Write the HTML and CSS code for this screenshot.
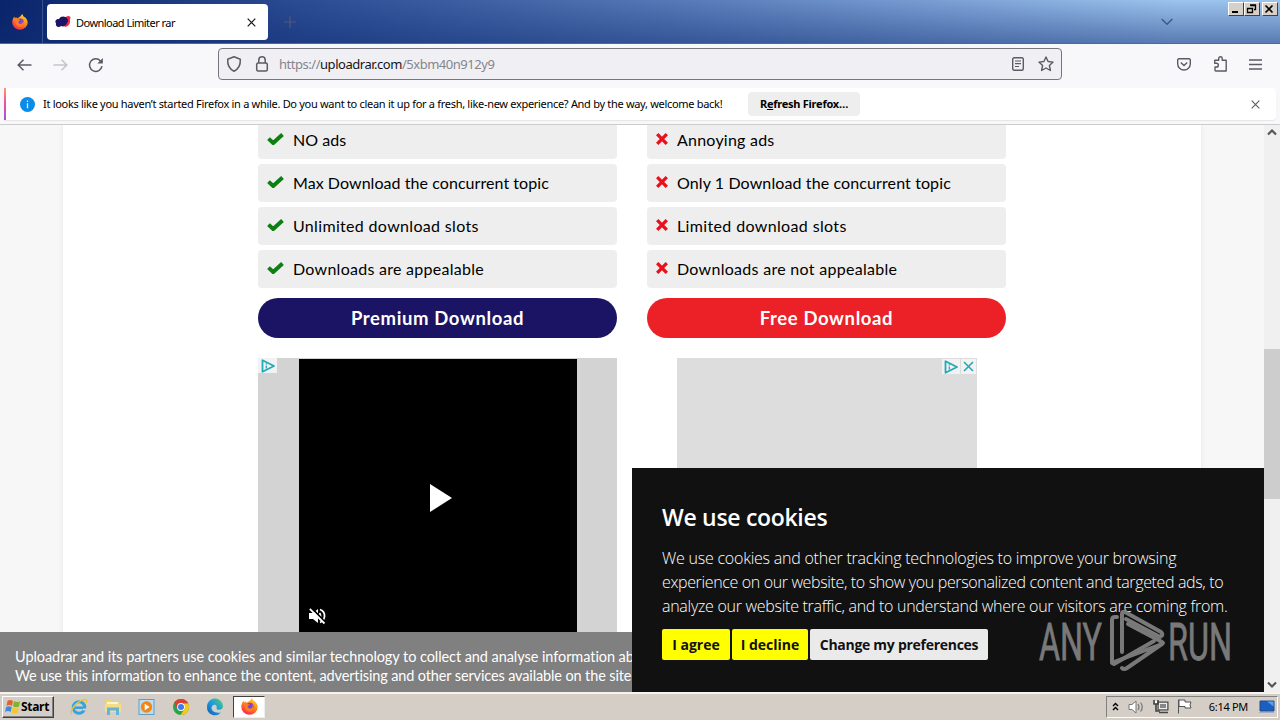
FILE: index.html
```html
<!DOCTYPE html>
<html lang="en">
<head>
<meta charset="utf-8">
<title>Download Limiter rar</title>
<link rel="stylesheet" href="styles.css">
</head>
<body>
<svg width="0" height="0" class="defs">
  <defs>
    <linearGradient id="ffg" x1="0.8" y1="0" x2="0.3" y2="1"><stop offset="0" stop-color="#ffe226"/><stop offset=".45" stop-color="#ff8a1c"/><stop offset="1" stop-color="#f5264e"/></linearGradient>
    <linearGradient id="edge" x1="0" y1="1" x2="1" y2="0"><stop offset="0" stop-color="#0b5cb8"/><stop offset=".5" stop-color="#1b9be0"/><stop offset="1" stop-color="#53d36a"/></linearGradient>
    <symbol id="firefox" viewBox="0 0 16 16">
      <path d="M8.2 2.5 10.3 0l1.2 2.4c2.500 1 4.200 3.400 4.200 6.100A7.700 7.200 0 0 1 .3 8.600C.3 6.300 1 4.300 2.300 2.600l.5 1.600 1.500-1 .8 1.300z" fill="url(#ffg)"/>
      <circle cx="8.300" cy="8" r="3.600" fill="#7a45d8"/>
      <path d="M3.500 5.500c2-.9 3.200 0 4.700.6L6.500 7.500c-1 1 .8 2.800 2.600 2.300 1.800-.4 2.200-2.200 1.500-4 2.400 2.700 1.500 6.300-1.900 7-3.300.5-6.200-3-5.200-7.300z" fill="#ff7a22"/>
    </symbol>
    <symbol id="check" viewBox="0 0 17 12"><path d="M1.500 5.600 6.200 10 15.500 1.500" fill="none" stroke="#0c8010" stroke-width="4"/></symbol>
    <symbol id="cross" viewBox="0 0 12 12"><path d="M1.200 1.200l9.600 9.600m0-9.600l-9.600 9.600" fill="none" stroke="#e8101a" stroke-width="3.300"/></symbol>
    <symbol id="adchoice" viewBox="0 0 14 14"><path d="M1.500 1.200v11.600L13 7z" fill="none" stroke="#22aab8" stroke-width="1.800" stroke-linejoin="round"/><path d="M5.300 6.400v3.200M5.300 4.200v1.200" stroke="#22aab8" stroke-width="1.300"/></symbol>
  </defs>
</svg>

<header class="titlebar">
  <div class="pinned"><svg width="16" height="16"><use href="#firefox"/></svg></div>
  <div class="tab">
    <svg width="16" height="14" viewBox="0 0 16 14"><path d="M10 3c1-2 4-3 5.500-1 0 2-1 2-.5 3.500C15.500 9 13 12 9.500 12z" fill="#ed2a45"/><path d="M4 4C5.500.8 10.500.8 12 3.500c1.800 1 1 3.500 0 4.500-1 3-4 4-6 3-2 2-6 .5-5-2.500C-.5 6 1 4 4 4z" fill="#1c1464"/></svg>
    <span class="tab-title">Download Limiter rar</span>
    <svg class="tab-close" width="9" height="9" viewBox="0 0 9 9"><path d="M.7.7l7.600 7.600m0-7.600L.7 8.300" stroke="#15141a" stroke-width="1.200"/></svg>
  </div>
  <svg class="newtab" width="12" height="12" viewBox="0 0 12 12"><path d="M6 0v12M0 6h12" stroke="#50597a" stroke-width="1.200"/></svg>
  <svg class="tablist" width="12" height="8" viewBox="0 0 12 8"><path d="M.7 1l5.300 5.300L11.300 1" fill="none" stroke="#3f5a85" stroke-width="1.500"/></svg>
  <div class="winbtns">
    <div class="wb"><svg width="12" height="10"><path d="M3 9h6" stroke="#000" stroke-width="2"/></svg></div>
    <div class="wb"><svg width="12" height="10"><path d="M5.500 2.500h5v4H9M5 2h6M2.500 5.500h5v4h-5zM2 5.500h6" fill="none" stroke="#000" stroke-width="1.300"/></svg></div>
    <div class="wb last"><svg width="12" height="10"><path d="M2.500 2.500l7 7m0-7l-7 7" stroke="#000" stroke-width="1.700"/></svg></div>
  </div>
</header>

<nav class="toolbar">
  <svg class="back" width="15" height="12" viewBox="0 0 15 12"><path d="M14.500 6H1.200M6.500.8L1.200 6l5.300 5.200" fill="none" stroke="#5b5b66" stroke-width="1.500"/></svg>
  <svg class="fwd" width="15" height="12" viewBox="0 0 15 12"><path d="M.5 6h13.300M8.500.8L13.800 6l-5.300 5.200" fill="none" stroke="#c3c3cb" stroke-width="1.500"/></svg>
  <svg class="reload" width="16" height="16" viewBox="0 0 16 16"><path d="M14 9.200a6.300 6.300 0 1 1-1.500-5.300" fill="none" stroke="#5b5b66" stroke-width="1.500"/><path d="M14.900.9v5.600H9.300z" fill="#5b5b66"/></svg>
  <div class="urlbar">
    <svg class="shield" width="16" height="16" viewBox="0 0 16 16"><path d="M8 .8l6.300 2.400c.3 5.200-1.700 9.800-6.300 12C3.400 13 1.400 8.400 1.700 3.200z" fill="none" stroke="#5b5b66" stroke-width="1.500" stroke-linejoin="round"/></svg>
    <svg class="lock" width="14" height="16" viewBox="0 0 14 16"><rect x="1.700" y="7" width="10.600" height="8" rx="1.500" fill="none" stroke="#5b5b66" stroke-width="1.500"/><path d="M3.800 7V4a3.200 3.200 0 0 1 6.400 0v3" fill="none" stroke="#5b5b66" stroke-width="1.500"/></svg>
    <span class="url">https://<b>uploadrar.com</b>/5xbm40n912y9</span>
    <svg class="reader" width="12" height="14" viewBox="0 0 12 14"><rect x=".7" y=".7" width="10.600" height="12.600" rx="1.500" fill="none" stroke="#5b5b66" stroke-width="1.400"/><path d="M3 4h6M3 6.700h6M3 9.500h4" stroke="#5b5b66" stroke-width="1.200"/></svg>
    <svg class="star" width="16" height="16" viewBox="0 0 16 16"><path d="M8 1l2.100 4.500 5 .6-3.700 3.400 1 5L8 12l-4.400 2.500 1-5L.9 6.100l5-.6z" fill="none" stroke="#5b5b66" stroke-width="1.400" stroke-linejoin="round"/></svg>
  </div>
  <svg class="pocket" width="14" height="13" viewBox="0 0 14 13"><path d="M2 .7h10q1.300 0 1.300 1.300v4a6.300 6 0 0 1-12.600 0V2Q.7.700 2 .7z" fill="none" stroke="#5b5b66" stroke-width="1.400"/><path d="M3.800 4.500L7 7.600l3.200-3.100" fill="none" stroke="#5b5b66" stroke-width="1.400"/></svg>
  <svg class="ext" width="15" height="16" viewBox="0 0 15 16"><path d="M2 14.300V11h1.500a1.800 1.800 0 0 0 0-3.700H1.700V4.200h4V2.500a1.700 1.700 0 0 1 3.500 0v1.700h4V15H2.700q-.7 0-.7-.7z" fill="none" stroke="#5b5b66" stroke-width="1.400" stroke-linejoin="round"/></svg>
  <svg class="menu" width="13" height="11" viewBox="0 0 13 11"><path d="M0 1h13M0 5.500h13M0 10h13" stroke="#5b5b66" stroke-width="1.300"/></svg>
</nav>

<section class="notice">
  <div class="notice-card">
    <i class="accent"></i>
    <svg class="info" width="15" height="15" viewBox="0 0 15 15"><circle cx="7.500" cy="7.500" r="7.500" fill="#0a8ce8"/><path d="M7.500 6.200v5M7.500 3.500v1.400" stroke="#d8f1ff" stroke-width="1.300"/></svg>
    <span class="notice-text">It looks like you haven’t started Firefox in a while. Do you want to clean it up for a fresh, like-new experience? And by the way, welcome back!</span>
    <div class="refresh"><span>R<u>e</u>fresh Firefox…</span></div>
    <svg class="notice-close" width="9" height="9" viewBox="0 0 9 9"><path d="M.7.7l7.600 7.600m0-7.600L.7 8.300" stroke="#5b5b66" stroke-width="1.100"/></svg>
  </div>
</section>

<main class="viewport">
  <div class="page">
    <div class="plans">
      <div class="plan">
        <div class="row"><svg width="17" height="12"><use href="#check"/></svg><span class="a1">NO ads</span></div>
        <div class="row"><svg width="17" height="12"><use href="#check"/></svg><span class="a2">Max Download the concurrent topic</span></div>
        <div class="row"><svg width="17" height="12"><use href="#check"/></svg><span class="a3">Unlimited download slots</span></div>
        <div class="row"><svg width="17" height="12"><use href="#check"/></svg><span class="a4">Downloads are appealable</span></div>
        <div class="cta premium"><span>Premium Download</span></div>
        <div class="ad video">
          <span class="adtag"><svg width="14" height="14"><use href="#adchoice"/></svg></span>
          <div class="screen">
            <svg class="play" width="22" height="28" viewBox="0 0 22 28"><path d="M0 0l22 14L0 28z" fill="#fff"/></svg>
            <svg class="mute" width="17" height="16" viewBox="0 0 17 16"><path d="M0 5h4l5-4v14l-5-4H0z" fill="#fff"/><path d="M10.500 5q2 3 0 6M11 1.500q5 2 4.500 7-.5 4-4.500 6" fill="none" stroke="#fff" stroke-width="1.800"/><path d="M2-.5l15 15.500" stroke="#000" stroke-width="1.800"/><path d="M.8.8L15.500 15.500" stroke="#fff" stroke-width="1.800"/></svg>
          </div>
        </div>
      </div>
      <div class="plan free">
        <div class="row"><svg width="12" height="12"><use href="#cross"/></svg><span class="b1">Annoying ads</span></div>
        <div class="row"><svg width="12" height="12"><use href="#cross"/></svg><span class="b2">Only 1 Download the concurrent topic</span></div>
        <div class="row"><svg width="12" height="12"><use href="#cross"/></svg><span class="b3">Limited download slots</span></div>
        <div class="row"><svg width="12" height="12"><use href="#cross"/></svg><span class="b4">Downloads are not appealable</span></div>
        <div class="cta red"><span>Free Download</span></div>
        <div class="ad banner">
          <span class="adtag"><svg width="14" height="14"><use href="#adchoice"/></svg></span>
          <span class="adtag close"><svg width="11" height="11" viewBox="0 0 11 11"><path d="M1 1l9 9m0-9l-9 9" stroke="#22aab8" stroke-width="1.600"/></svg></span>
        </div>
      </div>
    </div>
  </div>
  <div class="scrollbar">
    <svg width="10" height="7" viewBox="0 0 10 7"><path d="M1 5.500l4-4 4 4" fill="none" stroke="#555" stroke-width="2.200"/></svg>
    <div class="thumb"></div>
    <svg class="down" width="10" height="7" viewBox="0 0 10 7"><path d="M1 1.500l4 4 4-4" fill="none" stroke="#555" stroke-width="2.200"/></svg>
  </div>
  <div class="consent">
    <div><span class="c1">Uploadrar and its partners use cookies and similar technology to collect and analyse information ab</span></div>
    <div><span class="c2">We use this information to enhance the content, advertising and other services available on the site</span></div>
  </div>
  <div class="cookies">
    <h2><span>We use cookies</span></h2>
    <p><span class="p1">We use cookies and other tracking technologies to improve your browsing</span><br><span class="p2">experience on our website, to show you personalized content and targeted ads, to</span><br><span class="p3">analyze our website traffic, and to understand where our visitors are coming from.</span></p>
    <div class="choices">
      <div class="btn agree"><span>I agree</span></div><div class="btn decline"><span>I decline</span></div><div class="btn prefs"><span>Change my preferences</span></div>
    </div>
    <svg class="watermark" width="196" height="64" viewBox="0 0 196 64">
      <g fill="#858585" stroke="#858585" stroke-width=".8" font-family="Roboto, sans-serif" font-size="52.500"><text x="1" y="50.500" textLength="63" lengthAdjust="spacingAndGlyphs">ANY</text><text x="130" y="50.500" textLength="64" lengthAdjust="spacingAndGlyphs">RUN</text></g>
      <g fill="none" stroke="#858585" stroke-width="4" stroke-linejoin="round" stroke-linecap="round"><path d="M79 8h-2q-3 0-3 3v43l2 1 40-23"/><path d="M84 43V5q0-3 3-2l36 20q3 3-1 5l-34-18"/><path d="M90 15l34 18q2 1 0 2L76 53M84 59q2 2 5 0l35-24"/></g>
    </svg>
  </div>
</main>

<footer class="taskbar">
  <div class="start">
    <svg width="16" height="15" viewBox="0 0 16 15"><path d="M2.500 2Q5 0 8 2L7 7Q4 5 1.500 7z" fill="#e8612c"/><path d="M9 2q3 2 6 .2L14 7.500Q11 9 8 7.300z" fill="#79b62e"/><path d="M1.200 8Q4 6.500 6.700 8l-1 5Q3 11 0 13z" fill="#3c8ade"/><path d="M7.700 8.300q3 2 6 .4l-1 5q-3 1.500-6-.2z" fill="#f8c52c"/></svg>
    <span>Start</span>
  </div>
  <svg class="ql ie" width="18" height="18" viewBox="0 0 18 18"><circle cx="9" cy="9.500" r="5.800" fill="none" stroke="#36a3de" stroke-width="3"/><path d="M5 9.700h10" stroke="#36a3de" stroke-width="2.500"/><path d="M13 11.500h4" stroke="#d5cec7" stroke-width="2"/><path d="M2 16C-1 13 6 4 14 1.500q4-.5 2 3.500" fill="none" stroke="#e8c33a" stroke-width="1.400"/></svg>
  <svg class="ql" width="18" height="18" viewBox="0 0 18 18"><path d="M1.500 2h6l1 2H16v10H1.500z" fill="#f3d673"/><path d="M3 4h11v4H3z" fill="#fff6cc"/><path d="M1 6h16v8H1z" fill="#f6dc86"/><path d="M4.500 17v-6h9v6" fill="none" stroke="#62b5d8" stroke-width="3"/></svg>
  <svg class="ql" width="18" height="18" viewBox="0 0 18 18"><rect x="1" y="1.500" width="15" height="15" fill="#bcdcf0" stroke="#5d9fc9"/><circle cx="8.500" cy="9" r="5.700" fill="#f48514"/><path d="M6.700 5.700v6.600l5-3.300z" fill="#fff"/></svg>
  <svg class="ql" width="18" height="18" viewBox="0 0 18 18"><circle cx="9" cy="9" r="8" fill="#2ea24b"/><path d="M2 5a8 8 0 0 1 14.200.5H9L5.500 11z" fill="#dd4033"/><path d="M16.200 5.500A8 8 0 0 1 8.500 17L12.500 11 12 5.500z" fill="#fbc719"/><circle cx="9" cy="9" r="3.900" fill="#fff"/><circle cx="9" cy="9" r="3" fill="#3a7ce8"/></svg>
  <svg class="ql" width="18" height="18" viewBox="0 0 18 18"><path d="M1 9a8 8 0 0 1 16-1c.2 3-2.500 4.200-5.500 3.500-1.700-.6-.5-1.600-.8-3C10 6 6 6 5.500 10c0 3 3.500 5.500 9.500 4.500A8 8 0 0 1 1 9z" fill="url(#edge)"/></svg>
  <div class="running"><svg width="17" height="17"><use href="#firefox"/></svg></div>
  <div class="tray">
    <svg class="chev" width="7" height="9" viewBox="0 0 7 9"><path d="M1 4l2.500-2.500L6 4M1 8l2.500-2.500L6 8" fill="none" stroke="#000" stroke-width="1.400"/></svg>
    <svg class="vol" width="17" height="14" viewBox="0 0 17 14"><path d="M1 4.500h3L8 1v12L4 9.500H1z" fill="#fff" stroke="#777"/><path d="M10 4q2 3 0 6M12.500 2.500q3.500 4.500 0 9" fill="none" stroke="#777" stroke-width="1.200"/></svg>
    <svg class="net" width="17" height="15" viewBox="0 0 17 15"><rect x="5" y="3" width="10" height="8" fill="#aaa" stroke="#444"/><rect x="6.500" y="4.500" width="7" height="5" fill="#888" stroke="#eee"/><path d="M6 13.500h9" stroke="#444" stroke-width="1.500"/><path d="M1 1v4h4V1M3 5v7h4" fill="none" stroke="#444" stroke-width="1.600"/><path d="M2 2h2v2H2z" fill="#fff"/></svg>
    <svg class="flag" width="16" height="15" viewBox="0 0 16 15"><path d="M1.500.5v14M2 1h6v2h6q-2 3 0 6H8V7.500H2z" fill="#fff" stroke="#555"/></svg>
    <span class="clock">6:14 PM</span>
    <svg class="desk" width="17" height="13" viewBox="0 0 17 13"><path d="M2 1h14v10H2z" fill="#1c5ec0" stroke="#244b86"/><path d="M9 1.500h6.500v5z" fill="#55a1ee"/><path d="M1 12.500h15" stroke="#9eafc5"/></svg>
  </div>
</footer>
</body>
</html>
```
FILE: styles.css
```css
* { box-sizing: border-box; }
body { margin: 0; width: 1280px; height: 720px; overflow: hidden; display: flex; flex-direction: column; background: #fff; color: #000; font-family: "Noto Sans", sans-serif; font-size: 11px; }
svg { flex: none; display: block; overflow: visible; }
.defs { position: absolute; }
span { white-space: nowrap; }

.titlebar { height: 44px; flex: none; display: flex; background: linear-gradient(180deg, rgba(15,45,115,0), rgba(15,45,115,.48)), linear-gradient(90deg, #0a246a 0%, #2d4e95 25%, #5578b6 52%, #7fa4d8 76%, #9cc4ee 92%, #9cc4ee 100%); border-bottom: 1px solid #53688f; }
.pinned { width: 43px; padding: 14px 0 0 12px; border-right: 1px solid #3a5290; }
.tab { display: flex; align-items: center; width: 221px; height: 36px; margin: 4px 0 0 4px; padding: 0 12px 0 8px; background: #fff; border-radius: 4px; }
.tab-title { margin-left: 5px; letter-spacing: -.53px; }
.tab-close { margin-left: auto; }
.newtab { margin: 16px 0 0 16px; }
.tablist { margin: 18px 0 0 865px; }
.winbtns { display: flex; margin: 2px 0 0 auto; padding-right: 2px; }
.wb { width: 16px; height: 14px; padding: 0; background: #d6d0c8; border: 1px solid; border-color: #fff #404040 #404040 #fff; }
.wb.last { margin-left: 2px; }

.toolbar { height: 44px; flex: none; display: flex; align-items: center; padding: 0 18px 4px 17px; background: #f8f8fb; }
.back { margin-top: 1px; }
.fwd { margin: 1px 0 0 21px; }
.reload { margin: 1px 0 0 20px; }
.urlbar { display: flex; align-items: center; width: 844px; height: 32px; margin-left: 114px; padding: 0 7px; background: #f0f0f4; border: 1px solid #75757d; border-radius: 4px; }
.lock { margin-left: 13px; }
.url { margin-left: 10px; color: #85858c; font-size: 13px; letter-spacing: -.47px; }
.url b { font-weight: 400; color: #15141a; }
.reader { margin-left: auto; }
.star { margin-left: 14px; }
.pocket { margin-left: 115px; }
.ext { margin-left: 22px; }
.menu { margin-left: auto; }

.notice { height: 37px; flex: none; background: #f8f8fa; border-bottom: 1px solid #ccc; }
.notice-card { display: flex; align-items: center; height: 32px; width: 1272px; margin-left: 4px; background: #fff; border-radius: 0 4px 4px 0; box-shadow: 0 1px 1px #e5e5e8; }
.accent { width: 2px; height: 32px; background: linear-gradient(#ff9a6b, #f050a0 45%, #9559d8); }
.info { margin-left: 14px; }
.notice-text { margin: 0 0 2px 8px; width: 684px; letter-spacing: -.3px; }
.refresh { width: 112px; height: 24px; margin-left: 21px; background: #eee; border-radius: 4px; text-align: center; font-weight: 700; line-height: 24px; letter-spacing: -.25px; }
.notice-close { margin: 0 16px 0 auto; }

.viewport { position: relative; height: 567px; flex: none; display: flex; justify-content: space-between; overflow: hidden; background: #f7f7f7; }
.page { width: 1138px; margin-left: 63px; padding-left: 195px; background: #fff; box-shadow: 0 0 5px #e5e5e5; }
.plans { display: flex; gap: 30px; }
.plan { width: 359px; }
.row { display: flex; align-items: center; height: 38px; margin-bottom: 5px; padding: 0 0 0 9px; background: #eee; border-radius: 4px; font-family: Lato, sans-serif; font-size: 16px; }
.row:first-child { height: 34px; padding-bottom: 4px; border-radius: 0 0 4px 4px; }
.row svg { margin-bottom: 2px; }
.row span { margin: 0 0 1px 9px; }
.a1 { letter-spacing: .05px; }
.a2 { letter-spacing: .06px; }
.a3 { letter-spacing: .33px; }
.a4 { letter-spacing: .27px; }
.b1 { letter-spacing: .23px; }
.b2 { letter-spacing: .11px; }
.b3 { letter-spacing: .36px; }
.b4 { letter-spacing: .29px; }
.cta { height: 40px; margin-top: 10px; border-radius: 20px; color: #fff; font: 700 18.500px/40px Lato, sans-serif; letter-spacing: .62px; text-align: center; }
.premium { background: #1b1464; }
.red { background: #ec2027; }
.ad { margin-top: 20px; }
.video { position: relative; height: 290px; padding: 1px 40px 0 41px; background: #d3d3d3; }
.adtag { position: absolute; left: 0; top: 0; display: flex; align-items: center; justify-content: center; width: 19px; height: 15px; background: #f2f2f2; }
.screen { position: relative; height: 289px; background: #000; }
.play { position: absolute; left: 131px; top: 125px; }
.mute { position: absolute; left: 10px; top: 249px; }
.banner { position: relative; width: 300px; height: 250px; margin-left: 30px; background: #ddd; }
.banner .adtag { left: 265px; top: 1px; width: 18px; }
.banner .close { left: 284px; width: 15px; }

.scrollbar { width: 16px; display: flex; flex-direction: column; align-items: center; padding-top: 4px; background: #f0f0f0; }
.thumb { width: 16px; height: 150px; margin-top: 213px; background: #cdcdcd; }
.down { margin: auto 0 4px; }

.consent { position: absolute; left: 0; bottom: 0; width: 632px; height: 60px; padding: 15px; background: #808080; color: #fff; font: 14.500px/19px Lato, sans-serif; white-space: nowrap; }
.c1 { letter-spacing: -.07px; }
.c2 { letter-spacing: -.13px; }
.cookies { position: absolute; left: 632px; bottom: 0; width: 632px; height: 224px; padding: 32px 30px; background: #111; color: #fff; font-family: "Open Sans", "Noto Sans", sans-serif; }
.cookies h2 { margin: 0 0 10px; font-size: 23px; font-weight: 600; line-height: 35px; height: 36px; letter-spacing: -.3px; }
.cookies p { margin: 0; font-size: 16px; font-weight: 300; line-height: 24px; }
.p1 { letter-spacing: -.23px; }
.p2 { letter-spacing: -.36px; }
.p3 { letter-spacing: -.28px; }
.choices { display: flex; gap: 2px; margin-top: 11px; }
.btn { height: 31px; border-radius: 2px; background: #eaeaea; color: #111; font-size: 14px; font-weight: 700; line-height: 31px; text-align: center; }
.agree { width: 68px; background: #ff0; }
.decline { width: 76px; background: #ff0; }
.prefs { width: 178px; letter-spacing: -.28px; }
.watermark { position: absolute; left: 406px; top: 141px; opacity: .9; }

.taskbar { height: 28px; flex: none; display: flex; align-items: center; padding: 0 2px 1px; background: #d5cec7; border-top: 2px solid #f5f3ef; }
.start { display: flex; align-items: center; width: 52px; height: 22px; padding-left: 2px; border: 1px solid; border-color: #fff #404040 #404040 #fff; box-shadow: inset -1px -1px #808080; font-weight: 700; font-size: 12px; }
.start span { letter-spacing: -.3px; }
.ql { margin-left: 16px; }
.ie { margin-left: 16px; }
.running { display: flex; align-items: center; justify-content: center; width: 32px; height: 22px; margin-left: 9px; background: #fff; border: 1px solid; border-color: #404040 #eee #eee #404040; }
.tray { display: flex; align-items: center; width: 172px; height: 22px; margin-left: auto; padding: 0 2px 0 5px; border: 1px solid; border-color: #808080 #fff #fff #808080; }
.vol { margin-left: 9px; }
.net { margin-left: 8px; }
.flag { margin-left: 7px; }
.clock { margin-left: auto; margin-right: 10px; letter-spacing: -.3px; }
```
